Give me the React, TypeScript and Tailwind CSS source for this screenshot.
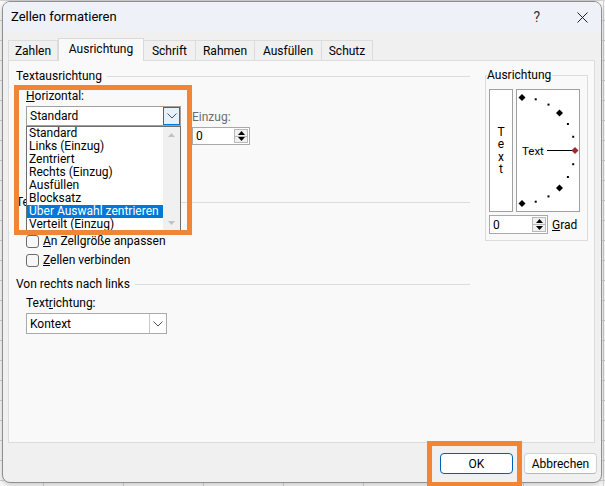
import React from "react";

// Kleine Hilfszeichnungen für die Dialog-Steuerelemente
function Chevron() {
  return (
    <svg width="10" height="6" viewBox="0 0 10 6">
      <polyline points="0.5,0.5 5,5 9.5,0.5" fill="none" stroke="#505050" strokeWidth="1" />
    </svg>
  );
}

function Tri({ up, color = "#000" }: { up?: boolean; color?: string }) {
  return (
    <svg width="7" height="4" viewBox="0 0 7 4">
      <polygon points={up ? "0,4 7,4 3.5,0" : "0,0 7,0 3.5,4"} fill={color} />
    </svg>
  );
}

function Spin({ className }: { className: string }) {
  return (
    <div className={`flex border border-[#a9a9a9] bg-white ${className}`}>
      <span className="flex flex-1 items-center pl-[3px]">0</span>
      <span className="my-[1px] mr-[1px] flex w-[14px] flex-col border border-[#b9b9b9] bg-[#f0f0f0]">
        <span className="flex flex-1 items-center justify-center border-b border-[#b9b9b9]">
          <Tri up />
        </span>
        <span className="flex flex-1 items-center justify-center">
          <Tri />
        </span>
      </span>
    </div>
  );
}

function Checkbox({ first, rest }: { first: string; rest: string }) {
  return (
    <div className="flex h-[14px] items-center pl-[10px]">
      <span className="h-[13px] w-[13px] rounded-[3px] border border-[#6b6b6b] bg-[#f7f7f7]" />
      <span className="ml-[4px]">
        <u>{first}</u>
        {rest}
      </span>
    </div>
  );
}

function GroupHead({ label }: { label: string }) {
  return (
    <div className="flex h-[14px] items-center gap-[5px]">
      <span className="leading-[14px]">{label}</span>
      <span className="h-px flex-1 bg-[#dcdcdc]" />
    </div>
  );
}

const TABS = [
  { label: "Zahlen", w: "w-[50px]" },
  { label: "Ausrichtung", w: "w-[86px]", active: true },
  { label: "Schrift", w: "w-[52px]" },
  { label: "Rahmen", w: "w-[59px]" },
  { label: "Ausfüllen", w: "w-[67px]" },
  { label: "Schutz", w: "w-[51px]" },
];

const OPTIONEN = [
  "Standard",
  "Links (Einzug)",
  "Zentriert",
  "Rechts (Einzug)",
  "Ausfüllen",
  "Blocksatz",
  "Über Auswahl zentrieren",
  "Verteilt (Einzug)",
];

function Dial() {
  // Halbkreis der Gradauswahl: Mittelpunkt links, Radius 53
  const cx = 5;
  const cy = 60.5;
  const r = 53;
  const punkte = Array.from({ length: 13 }, (_, i) => {
    const a = ((i * 15) * Math.PI) / 180;
    return { x: cx + r * Math.sin(a), y: cy - r * Math.cos(a), i };
  });
  return (
    <svg width="62" height="121" viewBox="0 0 62 121">
      {punkte.map((p) => {
        if (p.i % 3 === 0) {
          return (
            <polygon
              key={p.i}
              points={`${p.x},${p.y - 3.5} ${p.x + 3.5},${p.y} ${p.x},${p.y + 3.5} ${p.x - 3.5},${p.y}`}
              fill={p.i === 6 ? "#a3262a" : "#000"}
            />
          );
        }
        return <rect key={p.i} x={p.x - 1} y={p.y - 1} width="2" height="2" fill="#000" />;
      })}
      <line x1="30" y1={cy} x2="55" y2={cy} stroke="#000" strokeWidth="1" />
      <text x="5" y={cy + 4} fontSize="11.5" fontFamily="Roboto, sans-serif" fill="#000">
        Text
      </text>
    </svg>
  );
}

export default function App() {
  return (
    <div className="relative h-[486px] w-[605px] overflow-hidden bg-white bg-[linear-gradient(to_right,#d6d6d6_1px,transparent_1px),linear-gradient(to_bottom,#d6d6d6_1px,transparent_1px)] bg-[size:80px_20px] bg-[position:43px_0] font-['Roboto',sans-serif] text-[12px] text-black">
      <div className="ml-[2px] mt-[1px] flex h-[482px] w-[600px] flex-col overflow-hidden rounded-[8px] border border-[#8f8f8f] bg-[#f0f0f0] shadow-[0_2px_8px_rgba(0,0,0,0.25)]">
        {/* Titelleiste */}
        <div className="flex h-[30px] shrink-0 items-center bg-[#eef2f8] pl-[8px]">
          <span className="text-[13px]">Zellen formatieren</span>
          <span className="ml-auto mr-[36px] text-[14px] text-[#333]">?</span>
          <span className="mr-[13px] flex h-[12px] w-[12px] items-center justify-center">
            <svg width="11" height="11" viewBox="0 0 11 11">
              <path d="M0.5 0.5 L10.5 10.5 M10.5 0.5 L0.5 10.5" stroke="#222" strokeWidth="1" />
            </svg>
          </span>
        </div>

        {/* Register */}
        <div className="flex h-[28px] shrink-0 items-end pl-[5px]">
          {TABS.map((t) =>
            t.active ? (
              <div
                key={t.label}
                className={`relative z-10 -mb-px flex h-[23px] items-center justify-center border border-b-0 border-[#d9d9d9] bg-[#f9f9f9] pb-[2px] ${t.w}`}
              >
                {t.label}
              </div>
            ) : (
              <div
                key={t.label}
                className={`flex h-[20px] items-center justify-center border border-b-0 border-l-0 border-[#dcdcdc] first:border-l ${t.w}`}
              >
                {t.label}
              </div>
            ),
          )}
        </div>

        {/* Registerinhalt */}
        <div className="ml-[5px] flex h-[383px] w-[587px] shrink-0 border border-[#dcdcdc] bg-[#f9f9f9]">
          <div className="flex w-[461px] flex-col pl-[7px] pt-[8px]">
            <GroupHead label="Textausrichtung" />

            <div className="mt-[6px] flex items-start pl-[10px]">
              <div className="flex w-[155px] flex-col">
                <span className="h-[14px] leading-[14px]">
                  <u>H</u>orizontal:
                </span>
                <div className="relative mt-[3px]">
                  <div className="flex h-[20px] w-[155px] border border-[#a0a0a0] bg-white">
                    <span className="flex flex-1 items-center pl-[3px]">Standard</span>
                    <span className="flex w-[17px] items-center justify-center border border-[#0078d7] bg-[#e5f1fb]">
                      <Chevron />
                    </span>
                  </div>
                  {/* aufgeklappte Liste */}
                  <div className="absolute left-0 top-full z-20 flex h-[106px] w-[155px] border border-[#6e6e6e] bg-white">
                    <div className="flex flex-1 flex-col">
                      {OPTIONEN.map((o) => (
                        <span
                          key={o}
                          className={
                            o === "Über Auswahl zentrieren"
                              ? "h-[13px] bg-[#0078d7] pl-[2px] leading-[13px] text-white"
                              : "h-[13px] pl-[2px] leading-[13px]"
                          }
                        >
                          {o}
                        </span>
                      ))}
                    </div>
                    <div className="flex w-[17px] flex-col items-center justify-between bg-[#f0f0f0] py-[6px]">
                      <Tri up color="#c2c2c2" />
                      <Tri color="#c2c2c2" />
                    </div>
                  </div>
                </div>
              </div>
              <div className="ml-[11px] mt-[21px] flex flex-col">
                <span className="h-[14px] leading-[14px] text-[#6d6d6d]">Einzug:</span>
                <Spin className="mt-[3px] h-[18px] w-[58px]" />
              </div>
            </div>

            <div className="mt-[50px]">
              <GroupHead label="Te" />
            </div>
            <div className="mt-[25px]">
              <Checkbox first="A" rest="n Zellgröße anpassen" />
            </div>
            <div className="mt-[5px]">
              <Checkbox first="Z" rest="ellen verbinden" />
            </div>

            <div className="mt-[10px]">
              <GroupHead label="Von rechts nach links" />
            </div>
            <span className="mt-[5px] h-[14px] pl-[10px] leading-[14px]">
              Text<u>r</u>ichtung:
            </span>
            <div className="ml-[10px] mt-[3px] flex h-[21px] w-[141px] border border-[#a9a9a9] bg-white">
              <span className="flex flex-1 items-center pl-[3px]">Kontext</span>
              <span className="flex w-[17px] items-center justify-center border-l border-[#c8c8c8]">
                <Chevron />
              </span>
            </div>
          </div>

          {/* Gruppe Ausrichtung */}
          <div className="ml-[15px] mt-[14px] flex h-[166px] w-[103px] flex-col border border-[#dcdcdc]">
            <span className="-mt-[8px] ml-[1px] w-fit bg-[#f9f9f9] pr-[1px] leading-[14px]">Ausrichtung</span>
            <div className="mt-[7px] flex gap-[3px] pl-[3px]">
              <div className="flex h-[123px] w-[24px] flex-col items-center justify-center border border-[#a0a0a0] bg-white leading-[12.5px]">
                <span>T</span>
                <span>e</span>
                <span>x</span>
                <span>t</span>
              </div>
              <div className="h-[123px] w-[64px] border border-[#a0a0a0] bg-white">
                <Dial />
              </div>
            </div>
            <div className="mt-[3px] flex items-center pl-[3px]">
              <Spin className="h-[19px] w-[59px]" />
              <span className="ml-[4px]">
                <u>G</u>rad
              </span>
            </div>
          </div>
        </div>

        {/* Schaltflächen */}
        <div className="flex flex-1 items-start justify-end gap-[11px] pr-[4px] pt-[10px]">
          <button className="h-[21px] w-[73px] rounded-[4px] border border-[#005fb8] bg-white text-[12px]">OK</button>
          <button className="h-[21px] w-[73px] rounded-[4px] border border-[#d1d1d1] border-b-[#b8b8b8] bg-[#fdfdfd] text-[12px]">
            Abbrechen
          </button>
        </div>
      </div>

      {/* orange Markierungen */}
      <div className="absolute left-[14px] top-[85px] z-30 h-[150px] w-[178px] border-[5px] border-[#ef8535]" />
      <div className="absolute left-[427px] top-[441px] z-30 h-[46px] w-[95px] border-[5px] border-[#ef8535]" />
    </div>
  );
}
